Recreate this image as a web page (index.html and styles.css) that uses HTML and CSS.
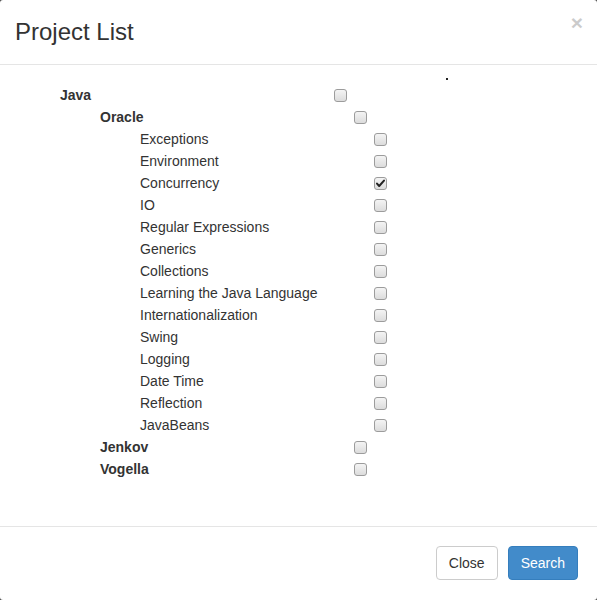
FILE: index.html
```html
<!DOCTYPE html>
<html>
<head>
<meta charset="utf-8">
<title>Project List</title>
<link rel="stylesheet" href="styles.css">
</head>
<body>
<div class="modal">
  <div class="modal-header">
    <h3 class="modal-title">Project List</h3>
    <button class="close" type="button">×</button>
  </div>
  <div class="modal-body">
    <span class="stray-dot"></span>
    <ul class="tree">
      <li class="row lvl0"><span class="label bold">Java</span><span class="cb"></span></li>
      <li class="row lvl1"><span class="label bold">Oracle</span><span class="cb"></span></li>
      <li class="row lvl2"><span class="label">Exceptions</span><span class="cb"></span></li>
      <li class="row lvl2"><span class="label">Environment</span><span class="cb"></span></li>
      <li class="row lvl2"><span class="label">Concurrency</span><span class="cb checked"><svg viewBox="0 0 13 13" width="13" height="13"><path d="M3 6.6 L5.2 9 L10 3.6" fill="none" stroke="#222" stroke-width="2" stroke-linecap="round" stroke-linejoin="round"/></svg></span></li>
      <li class="row lvl2"><span class="label">IO</span><span class="cb"></span></li>
      <li class="row lvl2"><span class="label">Regular Expressions</span><span class="cb"></span></li>
      <li class="row lvl2"><span class="label">Generics</span><span class="cb"></span></li>
      <li class="row lvl2"><span class="label">Collections</span><span class="cb"></span></li>
      <li class="row lvl2"><span class="label">Learning the Java Language</span><span class="cb"></span></li>
      <li class="row lvl2"><span class="label">Internationalization</span><span class="cb"></span></li>
      <li class="row lvl2"><span class="label">Swing</span><span class="cb"></span></li>
      <li class="row lvl2"><span class="label">Logging</span><span class="cb"></span></li>
      <li class="row lvl2"><span class="label">Date Time</span><span class="cb"></span></li>
      <li class="row lvl2"><span class="label">Reflection</span><span class="cb"></span></li>
      <li class="row lvl2"><span class="label">JavaBeans</span><span class="cb"></span></li>
      <li class="row lvl1"><span class="label bold">Jenkov</span><span class="cb"></span></li>
      <li class="row lvl1"><span class="label bold">Vogella</span><span class="cb"></span></li>
    </ul>
  </div>
  <div class="modal-footer">
    <button class="btn btn-default" type="button">Close</button>
    <button class="btn btn-primary" type="button">Search</button>
  </div>
</div>
</body>
</html>
```
FILE: styles.css
```css
html { background: #4a4a4a; }
body {
  margin: 0;
  font-family: "Liberation Sans", Arial, Helvetica, sans-serif;
  font-size: 14px;
  color: #333;
}
.modal {
  width: 597px;
  height: 600px;
  background: #fff;
  border-radius: 3px;
  display: flex;
  flex-direction: column;
  overflow: hidden;
}
.modal-header {
  padding: 15px;
  border-bottom: 1px solid #e5e5e5;
  display: flex;
  justify-content: space-between;
  align-items: flex-start;
}
.modal-title {
  margin: 0;
  font-size: 24px;
  font-weight: 500;
  line-height: 34px;
}
.close {
  border: 0;
  background: transparent;
  padding: 0;
  margin-top: -3px;
  margin-right: -1px;
  font-family: "Liberation Sans", Arial, sans-serif;
  font-size: 21px;
  font-weight: bold;
  line-height: 1;
  color: #000;
  opacity: .2;
}
.modal-body {
  position: relative;
  flex: 1;
  padding: 19px 0 46px 60px;
}
.stray-dot {
  position: absolute;
  left: 446px;
  top: 13px;
  width: 2px;
  height: 2px;
  background: #222;
}
.tree {
  list-style: none;
  margin: 0;
  padding: 0;
}
.row {
  display: flex;
  align-items: center;
  height: 22px;
  line-height: 22px;
}
.lvl0 .label { width: 274px; }
.lvl1 { padding-left: 40px; }
.lvl1 .label { width: 254px; }
.lvl2 { padding-left: 80px; }
.lvl2 .label { width: 234px; }
.bold { font-weight: bold; }
.cb {
  box-sizing: border-box;
  width: 13px;
  height: 13px;
  border: 1px solid #9c9c9c;
  border-radius: 3px;
  background: linear-gradient(#f4f4f4, #dcdcdc);
  display: inline-flex;
}
.cb svg { display: block; margin: -1px; }
.modal-footer {
  border-top: 1px solid #e5e5e5;
  padding: 19px 19px 20px;
  display: flex;
  justify-content: flex-end;
  gap: 10px;
}
.btn {
  font-family: "Liberation Sans", Arial, sans-serif;
  font-size: 14px;
  line-height: 20px;
  padding: 6px 12px;
  border: 1px solid;
  border-radius: 4px;
}
.btn-default {
  background: #fff;
  color: #333;
  border-color: #ccc;
}
.btn-primary {
  background: #428bca;
  color: #fff;
  border-color: #357ebd;
}
```
